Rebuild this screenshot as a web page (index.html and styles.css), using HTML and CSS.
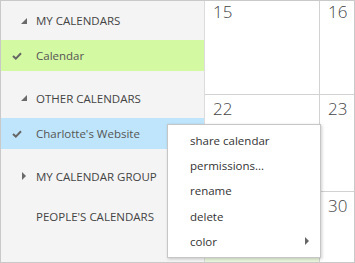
FILE: index.html
```html
<!DOCTYPE html>
<html lang="en">
<head>
	<meta charset="UTF-8">
	<title>Calendars</title>
	<link rel="stylesheet" href="styles.css">
</head>
<body>
	<div class="frame">
		<div class="side">
			<div class="group first">
				<svg class="tri" width="6" height="6" viewBox="0 0 6 6"><polygon points="6,0 6,6 0,6" fill="#6a6a6a"/></svg>
				MY CALENDARS
			</div>
			<div class="item green">
				<svg class="check" width="10" height="8" viewBox="0 0 10 8"><polyline points="1,4 3.8,6.6 9,1.2" fill="none" stroke="#666" stroke-width="2"/></svg>
				Calendar
			</div>
			<div class="group gap">
				<svg class="tri" width="6" height="6" viewBox="0 0 6 6"><polygon points="6,0 6,6 0,6" fill="#6a6a6a"/></svg>
				OTHER CALENDARS
			</div>
			<div class="item blue">
				<svg class="check" width="10" height="8" viewBox="0 0 10 8"><polyline points="1,4 3.8,6.6 9,1.2" fill="none" stroke="#666" stroke-width="2"/></svg>
				Charlotte's Website
			</div>
			<div class="group gap">
				<svg class="tri" width="6" height="8" viewBox="0 0 6 8"><polygon points="1,0 5,4 1,8" fill="#6a6a6a"/></svg>
				MY CALENDAR GROUP
			</div>
			<div class="group">
				<span class="tri"></span>
				PEOPLE'S CALENDARS
			</div>
		</div>
		<div class="cal">
			<div class="grid">
				<div class="cell">15</div>
				<div class="cell">16</div>
				<div class="cell">22</div>
				<div class="cell">23</div>
				<div class="cell today"></div>
				<div class="cell">30</div>
			</div>
		</div>
		<ul class="menu">
			<li>share calendar</li>
			<li>permissions...</li>
			<li>rename</li>
			<li>delete</li>
			<li class="sub">color <svg width="4" height="8" viewBox="0 0 4 8"><polygon points="0,0 4,4 0,8" fill="#666"/></svg></li>
		</ul>
	</div>
</body>
</html>
```
FILE: styles.css
```css
*{margin: 0;padding: 0;box-sizing: border-box;}
body {font-family: "Segoe UI", "Open Sans", "Noto Sans", sans-serif;background: #fff;}
.frame {width: 355px;height: 263px;border: 1px solid #c9c9c9;display: flex;position: relative;overflow: hidden;}
.side {width: 204px;background: #f4f4f4;border-right: 1px solid #dcdcdc;font-size: 11.5px;color: #444;}
.group {height: 40px;display: flex;align-items: center;padding-left: 20px;}
.group.first {height: 39px;}
.group.gap {margin-top: 7px;}
.tri {width: 6px;margin-right: 9px;display: inline-block;}
.item {height: 31px;display: flex;align-items: center;padding-left: 11px;color: #555;}
.check {margin-right: 14px;}
.green {background: #d4f9a3;}
.blue {background: #bee5fb;}
.cal {flex: 1;overflow: hidden;}
.grid {display: grid;grid-template-columns: 115px 115px;grid-auto-rows: 97px;margin-top: -3px;}
.cell {border-right: 1px solid #d2d2d2;border-bottom: 1px solid #d2d2d2;padding: 3px 0 0 8px;font-size: 17px;line-height: 22px;color: #444;font-weight: 300;}
.today {background: #e9f6dc;}
.menu {position: absolute;left: 166px;top: 123px;width: 154px;height: 134px;background: #fff;border: 1px solid #c6c6c6;box-shadow: 1px 1px 3px rgba(0,0,0,0.2);list-style: none;padding-top: 3px;font-size: 11.5px;color: #333;}
.menu li {height: 25.2px;line-height: 25px;padding-left: 22px;}
.menu .sub {display: flex;align-items: center;justify-content: space-between;padding-right: 11px;}
```
